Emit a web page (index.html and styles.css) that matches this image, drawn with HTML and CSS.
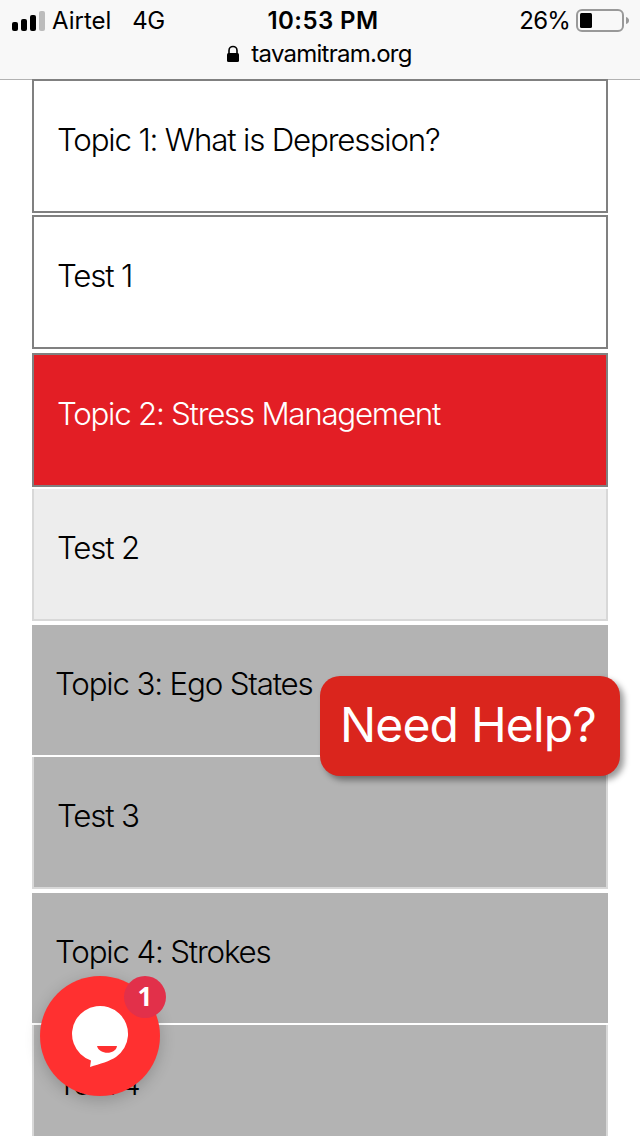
FILE: index.html
```html
<!DOCTYPE html>
<html lang="en">
<head>
    <meta charset="UTF-8">
    <meta name="viewport" content="width=device-width, initial-scale=1.0">
    <title>Tavamitram</title>
    <link rel="stylesheet" href="styles.css">
</head>
<body>

    <!-- Status bar and address -->
    <header class="browser-bar">
        <div class="status">
            <div class="status-left">
                <svg class="signal" width="34" height="20" viewBox="0 0 34 20">
                    <rect x="0" y="11" width="6" height="9" rx="2"/>
                    <rect x="9" y="8" width="6" height="12" rx="2"/>
                    <rect x="18" y="4" width="6" height="16" rx="2"/>
                    <rect x="27" y="0" width="6" height="20" rx="2" fill="#bcbcbc"/>
                </svg>
                <span class="carrier">Airtel</span>
                <span class="network">4G</span>
            </div>
            <div class="time">10:53 PM</div>
            <div class="status-right">
                <span class="percent">26%</span>
                <svg class="battery" width="54" height="24" viewBox="0 0 54 24">
                    <rect x="1" y="1" width="46" height="21" rx="5" fill="none" stroke="#999" stroke-width="2"/>
                    <rect x="4" y="4" width="12" height="15" rx="1.5"/>
                    <path d="M50 8 Q53 9 53 11.5 Q53 14 50 15 Z" fill="#999"/>
                </svg>
            </div>
        </div>
        <div class="address">
            <svg width="14" height="18" viewBox="0 0 14 18">
                <rect x="1" y="8" width="12" height="9" rx="1.5"/>
                <path d="M3 9 V5.500 a4 4 0 0 1 8 0 V9" fill="none" stroke="#000" stroke-width="1.600"/>
            </svg>
            <span class="domain">tavamitram.org</span>
        </div>
    </header>

    <ul class="topics">
        <li class="open"><span>Topic 1: What is Depression?</span></li>
        <li class="open last"><span>Test 1</span></li>
        <li class="open active"><span>Topic 2: Stress Management</span></li>
        <li class="test light last"><span>Test 2</span></li>
        <li class="locked"><span>Topic 3: Ego States</span></li>
        <li class="test last"><span>Test 3</span></li>
        <li class="locked"><span>Topic 4: Strokes</span></li>
        <li class="test last"><span>Test 4</span></li>
    </ul>

    <a class="help">Need Help?</a>

    <!-- Chat launcher -->
    <div class="chat">
        <svg width="120" height="120" viewBox="0 0 120 120">
            <path d="M51 84.500 A28 28 0 1 1 76 81 C70 85 60 88 50 91 Z" fill="#fff"/>
            <path d="M57 70 H77 C76 79 59 79 57 70 Z" fill="#ff3030"/>
        </svg>
        <span class="badge">1</span>
    </div>

</body>
</html>
```
FILE: styles.css
```css
* {
    box-sizing: border-box;
}
body {
    margin: 0;
    height: 1136px;
    overflow: hidden;
    position: relative;
    font-family: Inter, "Liberation Sans", sans-serif;
    background-color: #fff;
    color: #000;
}
.browser-bar {
    height: 80px;
    background-color: #f8f8f8;
    border-bottom: 1px solid #b2b2b2;
    font-size: 24px;
}
.status {
    display: grid;
    grid-template-columns: 1fr auto 1fr;
    height: 41px;
    line-height: 41px;
    padding: 0 10px 0 12px;
}
.status-left,
.status-right {
    display: flex;
    align-items: center;
}
.status-right {
    justify-content: flex-end;
}
.carrier {
    margin-left: 6px;
}
.network {
    margin-left: 21px;
    letter-spacing: -0.5px;
}
.time {
    font-weight: 600;
    letter-spacing: 0.4px;
    padding-left: 5px;
    padding-right: 1px;
}
.percent {
    letter-spacing: -0.8px;
}
.battery {
    margin-left: 6px;
}
.address {
    display: flex;
    justify-content: center;
    align-items: center;
    line-height: 26px;
    padding-right: 2px;
}
.address svg {
    margin-right: 11px;
}
.domain {
    letter-spacing: -0.75px;
}
.topics {
    list-style-type: none;
    margin: -1px 32px 0;
    padding: 0;
}
.topics li {
    padding: 39px 24px 51px;
    margin-bottom: 2px;
    font-size: 31.3px;
    line-height: 40px;
    font-weight: 300;
    letter-spacing: -1.17px;
    text-indent: -1px;
    white-space: nowrap;
}
.topics li.last {
    margin-bottom: 4px;
}
.topics .open {
    border: 2px solid #808080;
}
.topics li.active {
    background-color: #e31e25;
    color: #fff;
    letter-spacing: -1.25px;
}
.topics .locked {
    background-color: #b3b3b3;
}
.topics .test {
    background-color: #b3b3b3;
    border: 2px solid #d8d8d8;
    border-top: none;
}
.topics .light {
    background-color: #ededed;
}
.help {
    position: absolute;
    left: 320px;
    top: 676px;
    width: 300px;
    height: 100px;
    padding-right: 4px;
    line-height: 98px;
    border-radius: 20px;
    background-color: #da251d;
    color: #fff;
    font-size: 48px;
    letter-spacing: -0.8px;
    text-align: center;
    white-space: nowrap;
    box-shadow: 4px 4px 6px rgba(0, 0, 0, 0.4);
}
.chat {
    position: absolute;
    left: 40px;
    top: 976px;
    width: 120px;
    height: 120px;
    border-radius: 50%;
    background-color: #ff3030;
    box-shadow: 0 4px 16px rgba(0, 0, 0, 0.2);
}
.badge {
    position: absolute;
    left: 84px;
    top: 0;
    width: 42px;
    height: 42px;
    line-height: 41px;
    border-radius: 50%;
    background-color: #e2304a;
    color: #fff;
    font-family: "Open Sans", sans-serif;
    font-size: 26px;
    font-weight: 700;
    text-align: center;
}
```
